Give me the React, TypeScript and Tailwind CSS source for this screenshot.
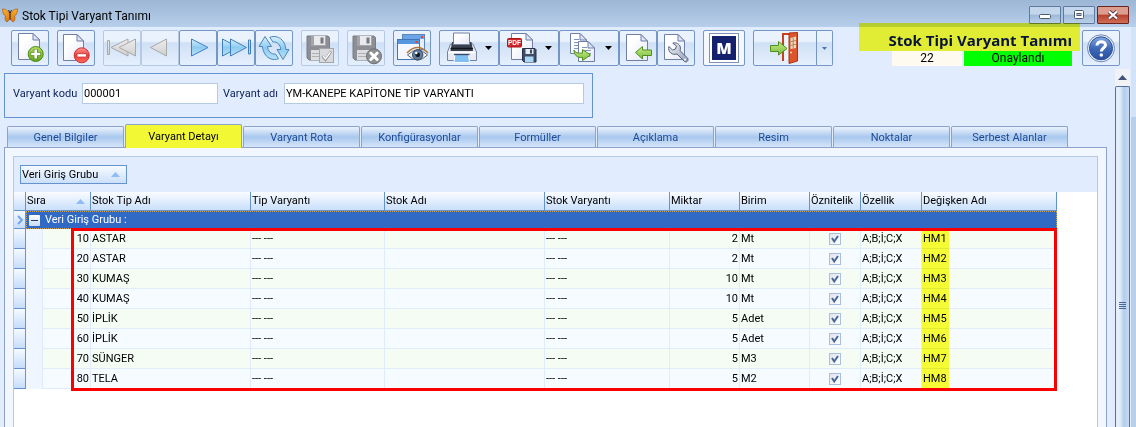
import React, { useState } from "react";

interface IconButtonProps {
  label: string;
  children: React.ReactNode;
  wide?: boolean;
  disabled?: boolean;
}

const IconButton = ({ label, children, wide, disabled }: IconButtonProps) => (
  <button
    aria-label={label}
    title={label}
    disabled={disabled}
    className={`h-9 shrink-0 rounded-[2px] border bg-linear-to-b from-[#eaf2fd] from-30% via-[#cfe0f5] via-35% to-[#e6f0fd] ${
      wide ? "w-[60px]" : "w-[38px]"
    } ${disabled ? "border-[#b4cae6]" : "border-[#7396c4]"}`}
  >
    <svg viewBox={wide ? "0 0 58 34" : "0 0 36 34"} className="block h-full w-full">
      {children}
    </svg>
  </button>
);

// shared icon parts
const Page = ({ x = 6, y = 3, w = 22, h = 27 }) => (
  <g stroke="#6f7fa8" strokeWidth="1" strokeLinejoin="round">
    <path
      d={`M${x + 0.5} ${y + 0.5}H${x + w - 7}L${x + w - 0.5} ${y + 7}V${y + h - 0.5}H${x + 0.5}Z`}
      fill="url(#paper)"
    />
    <path d={`M${x + w - 7} ${y + 0.5}V${y + 7}H${x + w - 0.5}Z`} fill="#dfe6f7" />
  </g>
);

const Floppy = () => (
  <g>
    <path d="M5 5H26L27.5 6.5V29H7L5 27Z" fill="#8d8f94" stroke="#7b7d82" />
    <rect x="9" y="5" width="15" height="10" fill="#a4a6aa" />
    <rect x="12" y="5" width="11" height="9" fill="#e9eaed" />
    <rect x="18.500" y="6.500" width="3" height="6" fill="#77797e" />
    <rect x="9" y="19" width="15" height="10" fill="#dddee1" />
    <path d="M10 22.500H22M10 25.500H22" stroke="#aeb0b4" />
  </g>
);

const Caret = () => <path d="M45 15H52L48.500 19Z" fill="#000" />;

const IconDefs = () => (
  <svg width="0" height="0" className="absolute" aria-hidden="true">
    <defs>
      <linearGradient id="paper" x1="0" y1="0" x2="1" y2="1">
        <stop offset="0.3" stopColor="#ffffff" />
        <stop offset="1" stopColor="#e3e7f6" />
      </linearGradient>
      <linearGradient id="blueArrow" x1="0" y1="0" x2="0" y2="1">
        <stop offset="0" stopColor="#d8effc" />
        <stop offset="0.5" stopColor="#8ecbf0" />
        <stop offset="1" stopColor="#b9e2f8" />
      </linearGradient>
      <linearGradient id="greyArrow" x1="0" y1="0" x2="0" y2="1">
        <stop offset="0" stopColor="#eeeeee" />
        <stop offset="1" stopColor="#cfcfcf" />
      </linearGradient>
      <linearGradient id="greenBall" x1="0" y1="0" x2="0" y2="1">
        <stop offset="0" stopColor="#b5dc62" />
        <stop offset="1" stopColor="#5fa31c" />
      </linearGradient>
      <linearGradient id="redBall" x1="0" y1="0" x2="0" y2="1">
        <stop offset="0" stopColor="#ff9b9b" />
        <stop offset="0.5" stopColor="#f23c3c" />
        <stop offset="1" stopColor="#fb6a5c" />
      </linearGradient>
      <linearGradient id="blueBall" x1="0" y1="0" x2="0" y2="1">
        <stop offset="0" stopColor="#86a9e0" />
        <stop offset="0.5" stopColor="#3d69b9" />
        <stop offset="1" stopColor="#2a509f" />
      </linearGradient>
      <linearGradient id="greenArrow" x1="0" y1="0" x2="0" y2="1">
        <stop offset="0" stopColor="#c8ec8c" />
        <stop offset="1" stopColor="#78bd38" />
      </linearGradient>
      <linearGradient id="steel" x1="0" y1="0" x2="1" y2="1">
        <stop offset="0" stopColor="#f2f5fa" />
        <stop offset="1" stopColor="#8f9bb3" />
      </linearGradient>
      <linearGradient id="wing" x1="0" y1="0" x2="0" y2="1">
        <stop offset="0" stopColor="#f9ae31" />
        <stop offset="1" stopColor="#e07608" />
      </linearGradient>
    </defs>
  </svg>
);

const Butterfly = () => (
  <svg viewBox="0 0 16 15" className="mt-1 h-[15px] w-4">
    <path
      d="M7.500 6C6 2.500 3 .5.500 1C.5 4 1.500 7 3.500 8C2.500 10 3 13 5 14C6.500 13 7.500 11 7.800 9Z"
      fill="url(#wing)"
      stroke="#a85f16"
      strokeWidth="0.7"
    />
    <path
      d="M8.500 6C10 2.500 13 .5 15.500 1C15.500 4 14.500 7 12.500 8C13.500 10 13 13 11 14C9.500 13 8.500 11 8.200 9Z"
      fill="url(#wing)"
      stroke="#a85f16"
      strokeWidth="0.7"
    />
    <path d="M8 4V12M8 5L6.500 2M8 5L9.500 2" stroke="#3c2410" strokeWidth="1" fill="none" />
  </svg>
);

const TitleBar = () => (
  <header className="flex h-[27px] items-center bg-linear-to-b from-[#9cb6d5] to-[#b7cfeb] pl-0.5 pr-[7px]">
    <Butterfly />
    <h1 className="ml-1 pt-1 font-['Roboto',sans-serif] text-xs leading-4 text-black">Stok Tipi Varyant Tanımı</h1>
    <div className="ml-auto flex gap-0.5 pt-0.5">
      <button
        aria-label="Simge durumuna küçült"
        className="flex h-[18px] w-8 items-center justify-center rounded-[1px] border border-[#5f7a9f] bg-linear-to-b from-[#c3d6ec] from-45% via-[#9fb9d8] via-50% to-[#b9cfe8]"
      >
        <svg viewBox="0 0 12 10" className="h-2.5 w-3">
          <rect x="0.500" y="4.500" width="11" height="4" rx="1" fill="#fff" stroke="#4b5a70" />
        </svg>
      </button>
      <button
        aria-label="Ekranı kapla"
        className="flex h-[18px] w-8 items-center justify-center rounded-[1px] border border-[#5f7a9f] bg-linear-to-b from-[#c3d6ec] from-45% via-[#9fb9d8] via-50% to-[#b9cfe8]"
      >
        <svg viewBox="0 0 12 10" className="h-2.5 w-3">
          <rect x="1.500" y="0.500" width="9" height="8" rx="1" fill="#fff" stroke="#4b5a70" />
          <rect x="4" y="3.500" width="4" height="2" fill="#a9bfda" stroke="#4b5a70" />
        </svg>
      </button>
      <button
        aria-label="Kapat"
        className="flex h-[18px] w-8 items-center justify-center rounded-[1px] border border-[#6b2420] bg-linear-to-b from-[#dc9c90] from-45% via-[#b8402c] via-50% to-[#cf6d55]"
      >
        <svg viewBox="0 0 12 10" className="h-2.5 w-3">
          <path d="M2 1.500L10 8.500M10 1.500L2 8.500" stroke="#5b3a44" strokeWidth="4" />
          <path d="M2 1.500L10 8.500M10 1.500L2 8.500" stroke="#fff" strokeWidth="2.200" />
        </svg>
      </button>
    </div>
  </header>
);

const Toolbar = () => (
  <div className="flex h-[42px] items-start gap-2 pl-[11px] pr-[11px] pt-[3px]">
    <IconButton label="Yeni">
      <Page x={6} y={2} w={22} h={27} />
      <circle cx="23.700" cy="23" r="7.500" fill="url(#greenBall)" stroke="#4d8a18" />
      <path d="M23.700 18V28M18.700 23H28.700" stroke="#4d8a18" strokeWidth="4" />
      <path d="M23.700 18.500V27.500M19.200 23H28.200" stroke="#fff" strokeWidth="2.600" />
    </IconButton>
    <IconButton label="Sil">
      <Page x={5} y={3} w={21} h={27} />
      <circle cx="23.700" cy="24.300" r="7.500" fill="url(#redBall)" stroke="#c92f2f" />
      <rect x="19" y="22.800" width="9.500" height="3.200" fill="#fff" stroke="#b72a2a" strokeWidth="0.700" />
    </IconButton>
    <div className="flex">
      <IconButton label="İlk kayıt" disabled>
        <g fill="url(#greyArrow)" stroke="#a8a8a8" strokeLinejoin="round">
          <path d="M24 8V25L7 16.500Z" />
          <path d="M31.500 8V25L15 16.500Z" />
          <rect x="3.500" y="9.500" width="2" height="14" />
        </g>
      </IconButton>
      <IconButton label="Önceki kayıt" disabled>
        <path d="M24.500 8V25L8.500 16.500Z" fill="url(#greyArrow)" stroke="#a8a8a8" strokeLinejoin="round" />
      </IconButton>
      <IconButton label="Sonraki kayıt">
        <path d="M11.500 8V25L28 16.500Z" fill="url(#blueArrow)" stroke="#3f7fc0" strokeLinejoin="round" />
      </IconButton>
      <IconButton label="Son kayıt">
        <g fill="url(#blueArrow)" stroke="#3f7fc0" strokeLinejoin="round">
          <path d="M4.500 8V25L20.500 16.500Z" />
          <path d="M12.500 8V25L28.500 16.500Z" />
          <rect x="30.500" y="9" width="2" height="14" />
        </g>
      </IconButton>
      <IconButton label="Yenile">
        <g fill="url(#blueArrow)" stroke="#4a86bd" strokeLinejoin="round">
          <path d="M9 5.500L3 15.500H6.500C7 23 12 28.500 18.500 28.500C20 28.500 21.500 28.200 22.500 27.700L19.500 23C15 23.500 11.800 20 11.500 15.500H15.500Z" />
          <path d="M27 28.500L33 18.500H29.800C29.500 11 24.500 5.500 18 5.500C16.500 5.500 15 5.800 13.800 6.300L16.800 11C21.300 10.500 24.500 14 24.800 18.500H21Z" />
        </g>
      </IconButton>
    </div>
    <IconButton label="Kaydet" disabled>
      <Floppy />
      <rect x="17.500" y="17.500" width="14" height="14" fill="#d9dadd" stroke="#a4a5a8" />
      <path d="M20.500 25L23.500 28.500L29 20.500" stroke="#8f9195" strokeWidth="2.600" fill="none" />
      <path d="M21 25L23.500 28L28.500 21" stroke="#fff" strokeWidth="1.300" fill="none" />
    </IconButton>
    <IconButton label="Kaydetme" disabled>
      <Floppy />
      <circle cx="26" cy="25.300" r="7.500" fill="#8e8f93" stroke="#6e6f73" />
      <path d="M22.800 22L29.200 28.500M29.200 22L22.800 28.500" stroke="#fff" strokeWidth="3" strokeLinecap="round" />
    </IconButton>
    <IconButton label="Önizleme">
      <rect x="8.500" y="3.500" width="22" height="15" fill="#e5effc" stroke="#5d84bd" />
      <rect x="9" y="4" width="21" height="4" fill="#6ba4e4" />
      <rect x="27" y="5" width="2" height="2" fill="#e8452f" />
      <rect x="3.500" y="8.500" width="22" height="20" fill="#f4f8fe" stroke="#4173b8" />
      <rect x="4" y="9" width="21" height="4" fill="#5797e0" />
      <rect x="21.500" y="10" width="2.500" height="2" fill="#e8452f" />
      <path d="M13.500 24Q23.500 14 33.500 24Q23.500 34 13.500 24Z" fill="#f3f4f7" stroke="#5c6478" />
      <circle cx="23.700" cy="23.800" r="5.200" fill="#5f7d9d" stroke="#33465c" />
      <circle cx="23.700" cy="23.800" r="2.400" fill="#101820" />
      <circle cx="22.300" cy="22" r="1.200" fill="#fff" />
      <path d="M13 22Q23.500 11 34 22" fill="none" stroke="#b5753a" strokeWidth="1.600" />
    </IconButton>
    <div className="flex">
      <IconButton label="Yazdır" wide>
        <path d="M10.500 13H33L36.500 21V29.500H7.500V21Z" fill="#e7eaf4" stroke="#7482a6" />
        <path d="M12 11H31.500L33 20H10.500Z" fill="#3a404e" />
        <path d="M13.500 2H29.500V13.500H13.500Z" fill="url(#paper)" stroke="#7482a6" />
        <path d="M10.500 17.500H33" stroke="#11151d" strokeWidth="1.500" />
        <path d="M8 21.500H36" stroke="#fff" strokeWidth="1.500" />
        <path d="M15 23.500H28.500L29.500 31.500H14Z" fill="#7fc0f2" stroke="#f9fbff" />
        <path d="M14 23.500H29.500" stroke="#3e4a66" strokeWidth="1.400" />
        <Caret />
      </IconButton>
      <IconButton label="PDF kaydet" wide>
        <Page x={11} y={2} w={22} h={27} />
        <rect x="7.500" y="7.500" width="14" height="8.500" rx="1" fill="#d0262b" stroke="#a9171c" />
        <text x="14.500" y="14.200" textAnchor="middle" fontSize="6.500" fontWeight="700" fontFamily="Liberation Sans, sans-serif" fill="#fff">PDF</text>
        <path d="M22.500 17.500H35L36 18.500V31H24L22.500 29.500Z" fill="#3e4c66" stroke="#27324a" />
        <rect x="25.500" y="18" width="8" height="5" fill="#e4e9f3" />
        <rect x="30" y="18.500" width="2" height="4" fill="#3e4c66" />
        <rect x="25" y="25.500" width="8.500" height="5.500" fill="#a9d6f5" />
        <Caret />
      </IconButton>
      <IconButton label="Kopyala" wide>
        <Page x={10} y={2} w={17} h={21} />
        <path d="M14 8.500H19M14 11.500H23M14 14.500H22M14 17.500H20" stroke="#8592ba" />
        <Page x={18} y={10} w={17} h={21} />
        <path d="M22 16.500H27M22 19.500H31M22 22.500H31M22 25.500H30" stroke="#8592ba" />
        <path d="M14 19C15 22 18 22.500 22.500 22V18.500L30.500 24L22.500 29.500V26.500C17 27 14 24 14 19Z" fill="url(#greenArrow)" stroke="#4f8f22" strokeLinejoin="round" />
        <Caret />
      </IconButton>
      <IconButton label="İçeri al">
        <Page x={6} y={3} w={22} h={27} />
        <path d="M15.500 21.500L22.500 15.500V19H31.500V24.500H22.500V28Z" fill="url(#greenArrow)" stroke="#4f8f22" strokeLinejoin="round" />
      </IconButton>
      <IconButton label="Ayarlar">
        <Page x={6} y={3} w={21} h={26} />
        <path
          d="M10.800 15.500L14.500 19L17.500 18L18.500 15L14.800 12.200C18 11 21.500 13 22.300 16C22.600 17.500 22.300 18.800 22 19.700L29.500 27C31 29 29 32 26.500 30.500L19 23C15 24.500 9.500 21.500 10.800 15.500Z"
          fill="url(#steel)"
          stroke="#56617c"
          strokeLinejoin="round"
        />
        <circle cx="27" cy="28.500" r="1" fill="#fff" />
      </IconButton>
    </div>
    <button
      aria-label="M"
      className="flex h-9 w-[42px] shrink-0 items-center justify-center rounded-[2px] border border-[#7396c4] bg-[#f4f8fe]"
    >
      <span className="border border-[#7f93b8] bg-white p-0.5">
        <span className="flex h-6 w-6 items-center justify-center bg-[#16216e] font-['Open_Sans',sans-serif] text-base font-extrabold text-white">
          M
        </span>
      </span>
    </button>
    <div className="flex">
      <button
        aria-label="Çıkış"
        className="h-9 w-16 rounded-l-[2px] border border-[#7396c4] bg-linear-to-b from-[#eaf2fd] from-30% via-[#cfe0f5] via-35% to-[#e6f0fd]"
      >
        <svg viewBox="0 0 62 34" className="block h-full w-full">
          <path d="M29 30V3H37" fill="none" stroke="#c9411c" strokeWidth="2" />
          <path d="M30.500 29V4.500H36V29Z" fill="#eef4fc" />
          <path d="M35 2L43.500 1.500V30L35 32.500Z" fill="#de552b" stroke="#a93412" />
          <path d="M36.500 7L42 5.500V17L36.500 18Z" fill="#e9dcc2" />
          <path d="M39.200 6.500V17.500M36.500 10.800L42 9.500M36.500 14.500L42 13.200" stroke="#b07a4c" strokeWidth="0.900" />
          <circle cx="37" cy="21.500" r="1" fill="#ffe0a0" />
          <path d="M16.500 14.500H24.500V10.500L33 17.500L24.500 24V20.500H16.500Z" fill="url(#greenArrow)" stroke="#4f8f22" strokeLinejoin="round" />
        </svg>
      </button>
      <button
        aria-label="Çıkış seçenekleri"
        className="flex h-9 w-4 items-center justify-center rounded-r-[2px] border border-l-0 border-[#7396c4] bg-linear-to-b from-[#eaf2fd] from-30% via-[#cfe0f5] via-35% to-[#e6f0fd]"
      >
        <svg viewBox="0 0 5 3" className="h-[3px] w-[5px]">
          <path d="M0 0H5L2.500 3Z" fill="#4b74ae" />
        </svg>
      </button>
    </div>

    <div className="-mt-[7px] ml-auto w-[221px] shrink-0">
      <div className="h-7 bg-[#ffff34] pr-2 text-right font-['Open_Sans',sans-serif] text-[15px] font-bold leading-[34px] text-[#0a1638] mix-blend-multiply">
        Stok Tipi Varyant Tanımı
      </div>
      <div className="mr-2 flex justify-end gap-0.5 text-center text-xs leading-[15px] text-black">
        <span className="w-[70px] bg-[#fffaf0]">22</span>
        <span className="w-[108px] bg-[#00ff00]">Onaylandı</span>
      </div>
    </div>
    <div className="-ml-1.5">
      <IconButton label="Yardım">
        <circle cx="18" cy="17.300" r="13.500" fill="#e9effa" stroke="#6e88b8" />
        <circle cx="18" cy="17.300" r="11.500" fill="url(#blueBall)" stroke="#2c4f97" />
        <path d="M14 14.500C14 9.500 22.500 9.500 22.500 14C22.500 17 18.300 17 18.300 20.500" fill="none" stroke="#fff" strokeWidth="3" />
        <circle cx="18.300" cy="24" r="1.800" fill="#fff" />
      </IconButton>
    </div>
  </div>
);

const tabs = [
  "Genel Bilgiler",
  "Varyant Detayı",
  "Varyant Rota",
  "Konfigürasyonlar",
  "Formüller",
  "Açıklama",
  "Resim",
  "Noktalar",
  "Serbest Alanlar",
];

const rows = [
  { sira: 10, ad: "ASTAR", miktar: 2, birim: "Mt", degisken: "HM1" },
  { sira: 20, ad: "ASTAR", miktar: 2, birim: "Mt", degisken: "HM2" },
  { sira: 30, ad: "KUMAŞ", miktar: 10, birim: "Mt", degisken: "HM3" },
  { sira: 40, ad: "KUMAŞ", miktar: 10, birim: "Mt", degisken: "HM4" },
  { sira: 50, ad: "İPLİK", miktar: 5, birim: "Adet", degisken: "HM5" },
  { sira: 60, ad: "İPLİK", miktar: 5, birim: "Adet", degisken: "HM6" },
  { sira: 70, ad: "SÜNGER", miktar: 5, birim: "M3", degisken: "HM7" },
  { sira: 80, ad: "TELA", miktar: 5, birim: "M2", degisken: "HM8" },
];

const headers = [
  "Stok Tip Adı",
  "Tip Varyantı",
  "Stok Adı",
  "Stok Varyantı",
  "Miktar",
  "Birim",
  "Öznitelik",
  "Özellik",
  "Değişken Adı",
];

const SortArrow = () => (
  <svg viewBox="0 0 9 5" className="h-[5px] w-[9px]">
    <path d="M0 5L4.500 0L9 5Z" fill="#8fbcf5" />
  </svg>
);

const th =
  "h-[19px] overflow-hidden whitespace-nowrap border-b border-r border-[#6593cf] bg-linear-to-b from-[#fafcff] to-[#c9dffb] px-px text-left font-normal";
const td = "h-5 overflow-hidden whitespace-nowrap border-b border-r border-[#e0ebfb] px-px";
const indicator = "border-b border-r border-[#6593cf] bg-linear-to-b from-[#f6faff] to-[#c5dcfa]";

const VariantTable = () => (
  <div className="relative pr-[40px]">
    <table className="w-full table-fixed border-separate border-spacing-0 text-black">
      <colgroup>
        <col className="w-3" />
        <col className="w-[17px]" />
        <col className="w-12" />
        <col className="w-40" />
        <col className="w-[134px]" />
        <col className="w-40" />
        <col className="w-[125px]" />
        <col className="w-[70px]" />
        <col className="w-[70px]" />
        <col className="w-[51px]" />
        <col className="w-[61px]" />
        <col />
      </colgroup>
      <thead>
        <tr>
          <th className={th} aria-label="Satır" />
          <th className={th} colSpan={2}>
            <span className="flex items-center justify-between pr-1">
              Sıra
              <SortArrow />
            </span>
          </th>
          {headers.map((header) => (
            <th key={header} className={th}>
              {header}
            </th>
          ))}
        </tr>
      </thead>
      <tbody>
        <tr>
          <td className={`h-[18px] ${indicator}`}>
            <svg viewBox="0 0 10 10" className="mx-auto block h-2.5 w-2.5">
              <path d="M3 1L7 5L3 9" fill="none" stroke="#6fa0e0" strokeWidth="1.800" />
            </svg>
          </td>
          <td
            colSpan={11}
            className="h-[18px] border border-dotted border-[#c9a45e] bg-[#316ac5] pl-0.5 text-white"
          >
            <span className="flex items-center gap-[5px] leading-4">
              <button
                aria-label="Grubu daralt"
                className="flex h-[11px] w-[11px] items-center justify-center rounded-[1px] bg-linear-to-b from-white to-[#c9dbf3]"
              >
                <span className="h-px w-[7px] bg-[#1d3b73]" />
              </button>
              Veri Giriş Grubu :
            </span>
          </td>
        </tr>
        {rows.map((row, index) => (
          <tr key={row.sira} className={index % 2 === 0 ? "bg-[#f4fcf3]" : "bg-[#f5fbff]"}>
            <td className={indicator} />
            <td className="border-r border-[#e0ebfb] bg-[#f0f6ff]" />
            <td className={`${td} text-right`}>{row.sira}</td>
            <td className={td}>{row.ad}</td>
            <td className={td}>--- ---</td>
            <td className={td} />
            <td className={td}>--- ---</td>
            <td className={`${td} text-right`}>{row.miktar}</td>
            <td className={td}>{row.birim}</td>
            <td className={td}>
              <span className="mx-auto grid h-3 w-3">
                <input
                  type="checkbox"
                  defaultChecked
                  aria-label={`Öznitelik ${row.sira}`}
                  className="peer col-start-1 row-start-1 h-3 w-3 appearance-none border border-[#a9bfe0] bg-linear-to-br from-[#dfe3ea] to-white"
                />
                <svg
                  viewBox="0 0 12 12"
                  className="pointer-events-none invisible col-start-1 row-start-1 h-3 w-3 peer-checked:visible"
                >
                  <path d="M3 5L5.200 8.500L9 3" fill="none" stroke="#4a6897" strokeWidth="2" />
                </svg>
              </span>
            </td>
            <td className={td}>A;B;İ;C;X</td>
            <td className="h-5 border-b border-[#e0ebfb] p-0">
              <span className="-mb-px block h-5 w-[27px] bg-[#ffff36] px-px leading-5 mix-blend-multiply">{row.degisken}</span>
            </td>
          </tr>
        ))}
      </tbody>
    </table>
    {/* highlight frame around the detail rows */}
    <div className="pointer-events-none absolute -bottom-0.5 left-[57px] right-[40px] top-9 border-3 border-[#fb0000]" />
  </div>
);

const ScrollBar = () => (
  <div className="flex w-4 shrink-0 flex-col pr-px">
    <button aria-label="Yukarı kaydır" className="flex h-[17px] items-center justify-center bg-[#f0f2f5]">
      <svg viewBox="0 0 9 5" className="h-[5px] w-[9px]">
        <path d="M0 5L4.500 0L9 5Z" fill="#42547a" />
      </svg>
    </button>
    <div className="flex-1 rounded-t-[2px] border border-b-0 border-[#53719f] bg-linear-to-r from-[#e4eefa] from-30% via-[#b3cdee] via-60% to-[#c7dbf4]">
      <div className="mx-auto mt-[215px] flex w-[7px] flex-col gap-px">
        <span className="h-px bg-[#4b6696]" />
        <span className="h-px bg-[#4b6696]" />
        <span className="h-px bg-[#4b6696]" />
        <span className="h-px bg-[#4b6696]" />
      </div>
    </div>
  </div>
);

const App = () => {
  const [active, setActive] = useState(1);

  return (
    <div className="flex h-screen flex-col overflow-hidden bg-linear-to-b from-[#d3e4f8] from-[117px] to-[#b9d0ec] to-[117px] font-['Roboto',sans-serif] text-[11px] leading-4">
      <IconDefs />
      <TitleBar />
      <div className="mr-[5px] flex min-h-0 flex-1 flex-col bg-[#e1edff]">
        <Toolbar />
        <div className="flex min-h-0 flex-1">
          <main className="flex min-w-0 flex-1 flex-col pl-1 pr-2 pt-1">
            <form className="flex h-[45px] w-[589px] items-center border border-[#6593cf] px-2 pb-1 text-[#0b1f56]">
              <label htmlFor="kod" className="w-[69px] whitespace-nowrap">
                Varyant kodu
              </label>
              <input
                id="kod"
                defaultValue="000001"
                className="h-[21px] w-[136px] border border-[#b4c9e4] bg-white px-px text-black"
              />
              <label htmlFor="ad" className="ml-[5px] w-[61px] whitespace-nowrap">
                Varyant adı
              </label>
              <input
                id="ad"
                defaultValue="YM-KANEPE KAPİTONE TİP VARYANTI"
                className="h-[21px] min-w-0 flex-1 border border-[#b4c9e4] bg-white px-px text-black"
              />
            </form>
            <div role="tablist" className="z-10 mt-1.5 flex h-6 items-end gap-px pl-[3px]">
              {tabs.map((tab, index) => (
                <button
                  key={tab}
                  role="tab"
                  aria-selected={index === active}
                  onClick={() => setActive(index)}
                  className={`w-[117px] rounded-t-[2px] border border-b-0 border-[#8ea3cb] ${
                    index === active
                      ? "h-6 bg-[#f3f834] text-black"
                      : "mb-px h-[21px] bg-linear-to-b from-[#e6effb] from-5% via-[#a9c8ee] via-50% to-[#d6e5f9] pt-0.5 text-[#1c4a99]"
                  }`}
                >
                  {tab}
                </button>
              ))}
            </div>
            <section className="-mt-px flex min-h-0 flex-1 flex-col border border-b-0 border-[#8ea3cb] bg-[#f2f7ff] p-2 pb-0">
              <div className="flex-1 border border-b-0 border-[#b4c9e4] bg-white">
                <div className="flex h-[35px] items-center bg-[#e1edff] px-1.5">
                  <button className="flex h-[19px] w-[107px] items-center justify-between border border-[#6593cf] bg-linear-to-b from-[#f6faff] to-[#cbe0fb] pl-px pr-1.5 text-black">
                    Veri Giriş Grubu
                    <SortArrow />
                  </button>
                </div>
                <VariantTable />
              </div>
            </section>
          </main>
          <ScrollBar />
        </div>
      </div>
    </div>
  );
};

export default App;
